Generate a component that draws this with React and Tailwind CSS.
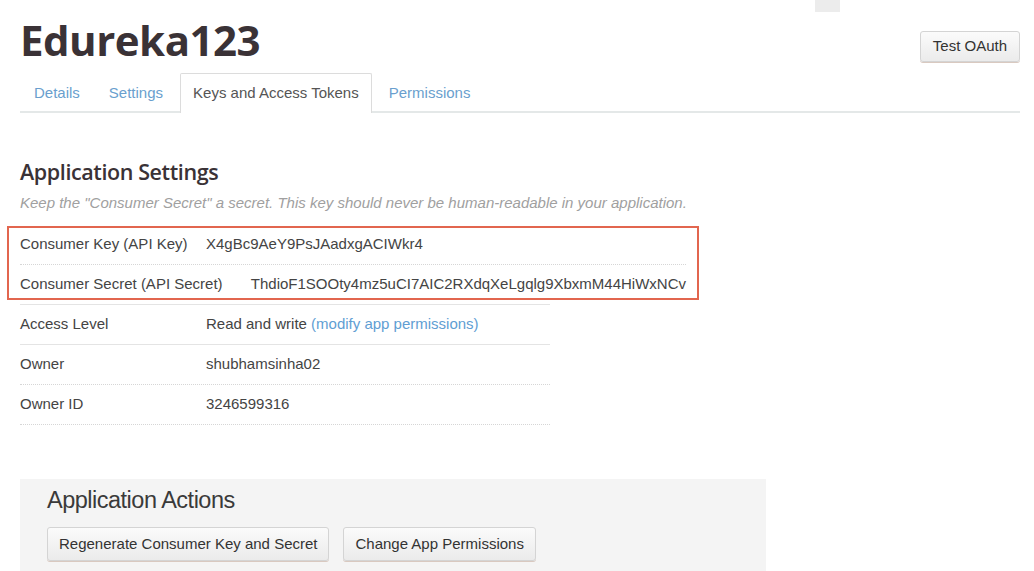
export default function App () {
  const rows = [
    { label: 'Access Level', value: <>Read and write <span className="text-[#5f9ed3]">(modify app permissions)</span></>, line: 'border-solid border-[#e4e4e4]' },
    { label: 'Owner', value: 'shubhamsinha02', line: 'border-dotted border-[#d6d6d6]' },
    { label: 'Owner ID', value: '3246599316', line: 'border-dotted border-[#d6d6d6]' }
  ]

  const btn = 'rounded-[3px] border border-[#d4d4d4] bg-gradient-to-b from-[#fbfbfb] to-[#ebebeb] text-[15px] text-[#333] shadow-[0_1px_0_#d9c9c0]'

  return (
    <div className="relative min-h-[571px] bg-white font-['Liberation_Sans',Arial,sans-serif] text-[15px] text-[#444]">
      <div className="absolute left-[815px] top-0 h-[12px] w-[25px] bg-[#ececec]" />
      <div className="w-[1000px] ml-[20px]">
        <div className="flex items-start justify-between pt-[14px]">
          <h1 className="font-['Open_Sans',sans-serif] font-bold text-[42px] leading-[52px] tracking-[-0.5px] text-[#3a3236]">Edureka123</h1>
          <button type="button" className={`mt-[17px] h-[31px] px-[12px] ${btn}`}>
            Test OAuth
          </button>
        </div>
        <div className="mt-[7px] flex h-[40px] border-b-[2px] border-[#e4e8e8]">
          <a className="px-[14px] pt-[9px] text-[#6a9fce] cursor-pointer">Details</a>
          <a className="pl-[15px] pr-[17px] pt-[9px] text-[#6a9fce] cursor-pointer">Settings</a>
          <a className="-mb-[2px] h-[40px] px-[12px] pt-[8px] border border-b-0 border-[#dcdcdc] bg-white text-[#555] rounded-t-[2px]">Keys and Access Tokens</a>
          <a className="pl-[17px] pt-[9px] text-[#6a9fce] cursor-pointer">Permissions</a>
        </div>

        <h2 className="mt-[45px] font-['Open_Sans',sans-serif] font-semibold text-[21.5px] leading-[28px] tracking-[-0.4px] text-[#3a3236]">Application Settings</h2>
        <p className="mt-[6px] italic leading-[22px] text-[#a0a0a0]">Keep the "Consumer Secret" a secret. This key should never be human-readable in your application.</p>

        <div className="relative mt-[11px]">
          <div className="w-[666px]">
            <div className="flex h-[40px] items-center border-b border-dotted border-[#d6d6d6]">
              <span className="w-[186px]">Consumer Key (API Key)</span>
              <span>X4gBc9AeY9PsJAadxgACIWkr4</span>
            </div>
            <div className="flex h-[39px] items-center">
              <span className="w-[233px]">Consumer Secret (API Secret)</span>
              <span>ThdioF1SOOty4mz5uCI7AIC2RXdqXeLgqlg9XbxmM44HiWxNCv</span>
            </div>
          </div>

          <div className="w-[530px] border-t border-[#e4e4e4]">
            {rows.map(r => (
              <div key={r.label} className={`flex h-[40px] items-center border-b ${r.line}`}>
                <span className="w-[186px]">{r.label}</span>
                <span>{r.value}</span>
              </div>
            ))}
          </div>

          <div className="absolute left-[-13px] top-[1px] h-[74px] w-[692px] border-[2px] border-[#e2664f]" />
        </div>

        <div className="mt-[54px] h-[100px] w-[746px] bg-[#f4f4f4] pl-[27px] pt-[7px]">
          <h3 className="text-[23.5px] leading-[28px] tracking-[-0.5px] text-[#3a3a3a]">Application Actions</h3>
          <div className="mt-[13px] flex gap-[14px]">
            <button type="button" className={`h-[34px] px-[11px] ${btn}`}>Regenerate Consumer Key and Secret</button>
            <button type="button" className={`h-[34px] px-[11px] ${btn}`}>Change App Permissions</button>
          </div>
        </div>
      </div>
    </div>
  )
}
